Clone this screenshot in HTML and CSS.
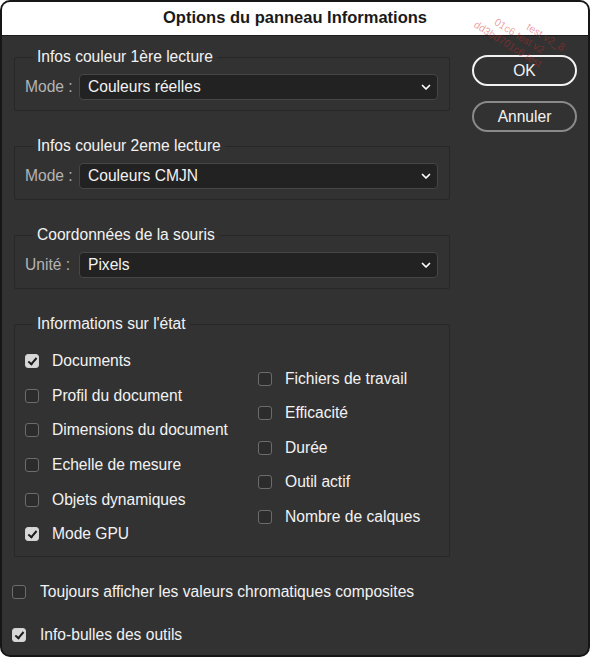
FILE: index.html
```html
<!DOCTYPE html>
<html lang="fr">

<head>
    <meta charset="UTF-8">
    <meta name="viewport" content="width=device-width, initial-scale=1.0">
    <title>Options du panneau Informations</title>
    <link rel="stylesheet" href="styles.css">
</head>

<body>

    <div class="dialog">
        <div class="dialog__title">Options du panneau Informations</div>

        <div class="watermark">
            <span>test v2_8</span>
            <span>01c6 test v2</span>
            <span>dd3bd701c6 test</span>
        </div>

        <div class="dialog__body">
            <div class="dialog__top">
                <div class="groups">
                    <fieldset class="group">
                        <legend>Infos couleur 1ère lecture</legend>
                        <div class="field">
                            <span class="field__label">Mode :</span>
                            <div class="select">
                                <span>Couleurs réelles</span>
                                <svg class="select__arrow" width="10" height="7" viewBox="0 0 10 7"><path d="M1.5 1.5 L5 5 L8.5 1.5" fill="none" stroke="#fff" stroke-width="1.7" stroke-linecap="round" stroke-linejoin="round"/></svg>
                            </div>
                        </div>
                    </fieldset>

                    <fieldset class="group">
                        <legend>Infos couleur 2eme lecture</legend>
                        <div class="field">
                            <span class="field__label">Mode :</span>
                            <div class="select">
                                <span>Couleurs CMJN</span>
                                <svg class="select__arrow" width="10" height="7" viewBox="0 0 10 7"><path d="M1.5 1.5 L5 5 L8.5 1.5" fill="none" stroke="#fff" stroke-width="1.7" stroke-linecap="round" stroke-linejoin="round"/></svg>
                            </div>
                        </div>
                    </fieldset>

                    <fieldset class="group">
                        <legend>Coordonnées de la souris</legend>
                        <div class="field">
                            <span class="field__label">Unité :</span>
                            <div class="select">
                                <span>Pixels</span>
                                <svg class="select__arrow" width="10" height="7" viewBox="0 0 10 7"><path d="M1.5 1.5 L5 5 L8.5 1.5" fill="none" stroke="#fff" stroke-width="1.7" stroke-linecap="round" stroke-linejoin="round"/></svg>
                            </div>
                        </div>
                    </fieldset>

                    <fieldset class="group group--state">
                        <legend>Informations sur l'état</legend>
                        <div class="state">
                            <div class="state__col">
                                <label class="check"><span class="box box--on"></span>Documents</label>
                                <label class="check"><span class="box"></span>Profil du document</label>
                                <label class="check"><span class="box"></span>Dimensions du document</label>
                                <label class="check"><span class="box"></span>Echelle de mesure</label>
                                <label class="check"><span class="box"></span>Objets dynamiques</label>
                                <label class="check"><span class="box box--on"></span>Mode GPU</label>
                            </div>
                            <div class="state__col">
                                <label class="check"><span class="box"></span>Fichiers de travail</label>
                                <label class="check"><span class="box"></span>Efficacité</label>
                                <label class="check"><span class="box"></span>Durée</label>
                                <label class="check"><span class="box"></span>Outil actif</label>
                                <label class="check"><span class="box"></span>Nombre de calques</label>
                            </div>
                        </div>
                    </fieldset>
                </div>

                <div class="buttons">
                    <div class="btn btn--default">OK</div>
                    <div class="btn">Annuler</div>
                </div>
            </div>

            <div class="options">
                <label class="check check--wide"><span class="box"></span>Toujours afficher les valeurs chromatiques composites</label>
                <label class="check check--wide"><span class="box box--on"></span>Info-bulles des outils</label>
            </div>
        </div>
    </div>

</body>

</html>
```

FILE: styles.css
```css
* {
    margin: 0;
    padding: 0;
    box-sizing: border-box;
}

:root {
    --bg: #323232;
    --line: #272727;
    --text: #f2f2f2;
    --muted: #b4b4b4;
}

body {
    font-family: "Liberation Sans", Arial, sans-serif;
    font-size: 15.6px;
    background: #fff;
    color: var(--text);
}

.dialog {
    position: relative;
    width: 590px;
    height: 657px;
    border: 2px solid #161616;
    border-radius: 10px;
    overflow: hidden;
    background: var(--bg);
}

.dialog__title {
    height: 34px;
    background: #fff;
    color: #1a1a1a;
    font-weight: bold;
    font-size: 16.5px;
    text-align: center;
    line-height: 30px;
    border-bottom: 1px solid #1c1c1c;
}

.watermark {
    position: absolute;
    top: -6px;
    left: 490px;
    display: flex;
    flex-direction: column;
    align-items: flex-start;
    transform: rotate(32deg);
    transform-origin: top left;
    color: rgba(205, 40, 40, 0.45);
    font-size: 10.5px;
    line-height: 13px;
    pointer-events: none;
}

.watermark span:nth-child(1) {
    margin-left: 46px;
}

.watermark span:nth-child(2) {
    margin-left: 16px;
}

.dialog__body {
    display: flex;
    flex-direction: column;
}

.dialog__top {
    display: flex;
}

.groups {
    display: flex;
    flex-direction: column;
    gap: 26px;
    padding-left: 12px;
    padding-top: 12px;
}

.group {
    width: 436px;
    border: 1px solid var(--line);
    border-radius: 2px;
    padding: 8px 11px 10px 10px;
}

.group legend {
    margin-left: 8px;
    padding: 0 4px;
    line-height: 18px;
    color: var(--text);
}

.field {
    display: flex;
    align-items: center;
}

.field__label {
    width: 54px;
    color: var(--muted);
}

.select {
    flex: 1;
    height: 26px;
    display: flex;
    align-items: center;
    justify-content: space-between;
    padding: 0 6px 0 8px;
    background: #222;
    border: 1px solid #464646;
    border-radius: 4px;
}

.select__arrow {
    display: block;
}

.group--state {
    padding-top: 11px;
    padding-bottom: 4px;
}

.state {
    display: flex;
    align-items: center;
}

.state__col {
    display: flex;
    flex-direction: column;
}

.state__col:first-child {
    width: 233px;
}

.check {
    display: flex;
    align-items: center;
    height: 34.6px;
    gap: 13px;
    white-space: nowrap;
}

.box {
    width: 14px;
    height: 14px;
    border: 1.5px solid #6c6c6c;
    border-radius: 3px;
    background: #2c2c2c;
    flex-shrink: 0;
}

.box--on {
    border-color: #d2d2d2;
    background: #d8d8d8;
    position: relative;
}

.box--on::after {
    content: "";
    position: absolute;
    left: 3.5px;
    top: 0.5px;
    width: 3px;
    height: 7px;
    border: solid #1c1c1c;
    border-width: 0 2px 2px 0;
    transform: rotate(40deg);
}

.buttons {
    display: flex;
    flex-direction: column;
    gap: 15px;
    margin-left: 22px;
    margin-top: 19px;
}

.btn {
    width: 105px;
    height: 31px;
    border: 2px solid #8a8a8a;
    border-radius: 16px;
    text-align: center;
    line-height: 27px;
}

.btn--default {
    border-color: #f2f2f2;
}

.options {
    display: flex;
    flex-direction: column;
    gap: 9px;
    padding-left: 10px;
    padding-top: 18px;
}

.check--wide {
    gap: 14px;
}
```
